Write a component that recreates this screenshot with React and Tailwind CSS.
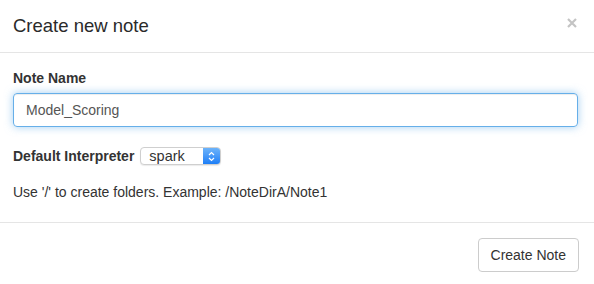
import React from 'react';

// Modal "Create new note"
export default function App() {
  return (
    <div className="w-[594px] h-[284px] bg-white overflow-hidden text-[#333] font-['Liberation_Sans',Arial,sans-serif]">
      {/* Cabeçalho */}
      <div className="h-[53px] border-b border-[#e5e5e5] pl-[13px] pr-[15px] flex items-center justify-between">
        <h4 className="text-[18.5px] leading-[26px] mt-[-1px] text-[#2a2a2a]">Create new note</h4>
        <button className="text-[#c4c4c4] mr-[2px] mt-[-6px]">
          <svg width="10" height="10" viewBox="0 0 10 10">
            <path d="M1 1 L9 9 M9 1 L1 9" stroke="currentColor" strokeWidth="2.2" />
          </svg>
        </button>
      </div>

      {/* Corpo */}
      <div className="pl-[13px] pr-[16px] pt-[15px] pb-[20px]">
        <label className="block text-[14px] leading-[20px] font-bold mb-[5px]">Note Name</label>
        <input
          defaultValue="Model_Scoring"
          className="w-full h-[34px] px-[12px] text-[14px] text-[#555] border border-[#66afe9] rounded-[4px] outline-none shadow-[inset_0_1px_1px_rgba(0,0,0,0.075),0_0_8px_rgba(102,175,233,0.6)]"
        />

        <div className="flex items-center mt-[20px] h-[18px]">
          <span className="text-[14px] font-bold leading-[20px]">Default Interpreter</span>
          <div className="ml-[6px] flex w-[81px] h-[18px] border border-[#cfcfcf] rounded-[4px] bg-white shadow-[0_1px_1px_rgba(0,0,0,0.08)] overflow-hidden">
            <span className="flex-1 pl-[8px] text-[14.5px] leading-[16px]">spark</span>
            <span className="w-[17px] h-full bg-gradient-to-b from-[#6cb3fa] to-[#1b7ef6] flex items-center justify-center">
              <svg width="7" height="11" viewBox="0 0 7 11">
                <path d="M1 4 L3.5 1.5 L6 4 M1 7 L3.5 9.5 L6 7" stroke="white" strokeWidth="1.2" fill="none" />
              </svg>
            </span>
          </div>
        </div>

        <p className="mt-[17px] text-[14px] leading-[20px]">Use '/' to create folders. Example: /NoteDirA/Note1</p>
      </div>

      {/* Rodapé */}
      <div className="border-t border-[#e5e5e5] pt-[15px] pr-[15px] flex justify-end">
        <button className="h-[34px] px-[12px] text-[14px] border border-[#ccc] rounded-[4px] bg-white">Create Note</button>
      </div>
    </div>
  );
}
